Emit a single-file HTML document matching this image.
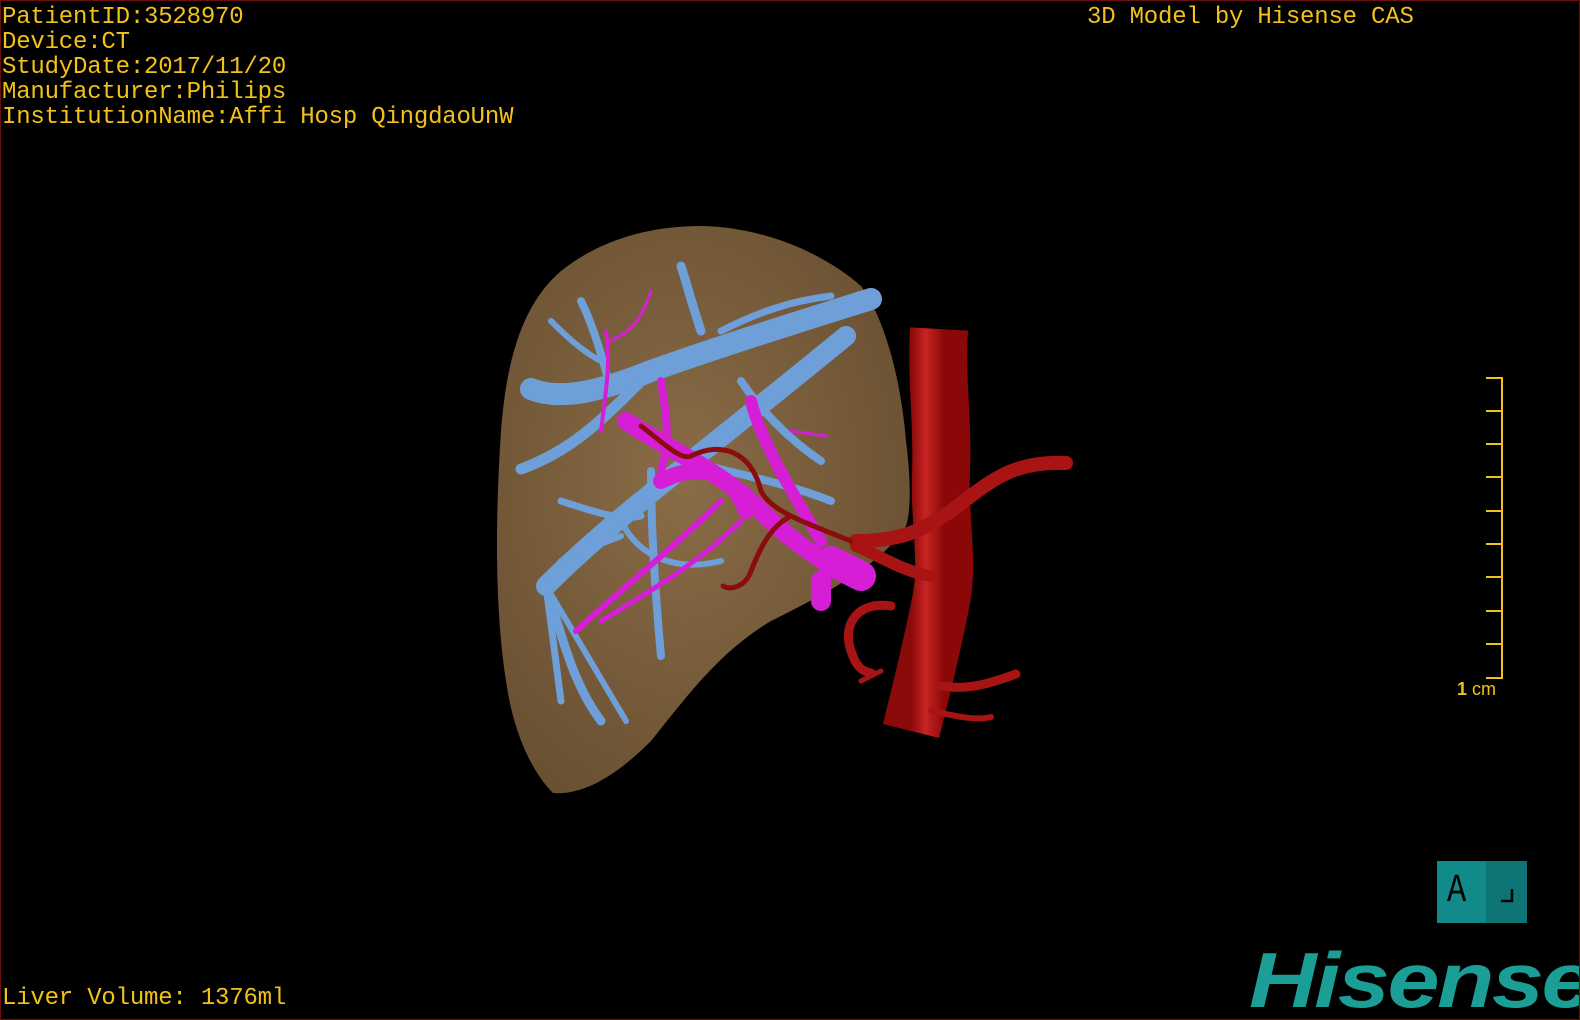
<!DOCTYPE html>
<html><head><meta charset="utf-8"><style>
html,body{margin:0;padding:0;background:#000;}
#c{position:relative;width:1580px;height:1020px;background:#000;box-sizing:border-box;border:1px solid #6a0f10;overflow:hidden;font-family:"Liberation Mono","Noto Sans CJK JP",monospace;}
.t{position:absolute;color:#f2c21a;font-size:24px;line-height:25px;white-space:pre;letter-spacing:-0.2px;}
svg{position:absolute;left:0;top:0;}
</style></head><body><div id="c">
<svg width="1580" height="1020" viewBox="0 0 1580 1020">
<defs>
<radialGradient id="lg" cx="0.45" cy="0.45" r="0.6"><stop offset="0" stop-color="#8a6c47"/><stop offset="1" stop-color="#6a5132"/></radialGradient>
<linearGradient id="rg" x1="0" x2="1"><stop offset="0" stop-color="#8a0a0a"/><stop offset="0.45" stop-color="#c82424"/><stop offset="1" stop-color="#8a0808"/></linearGradient>
</defs>
<path d="M552,792 C530,770 512,730 505,680 C494,610 494,520 500,430 C506,350 525,300 560,270 C600,238 650,225 700,225 C760,226 820,250 860,285 C885,320 900,380 905,440 C910,480 910,510 905,525 C880,565 820,595 770,620 C720,650 690,690 650,740 C620,770 585,795 552,792 Z" fill="url(#lg)"/>
<g fill="none" stroke-linecap="round" stroke="#6f9fd8">
<path d="M870,298 C800,320 720,345 650,370 C600,390 560,400 530,388" stroke-width="22"/>
<path d="M845,335 C790,380 740,420 690,460 C640,500 590,540 545,585" stroke-width="20"/>
<path d="M545,585 C560,630 570,680 600,720" stroke-width="9"/>
<path d="M545,585 L560,700" stroke-width="7"/>
<path d="M545,585 L625,720" stroke-width="6"/>
<path d="M640,380 C600,420 570,450 520,468" stroke-width="11"/>
<path d="M610,390 C600,350 590,320 580,300" stroke-width="8"/>
<path d="M700,330 C690,300 685,280 680,265" stroke-width="9"/>
<path d="M720,330 C760,310 790,300 830,295" stroke-width="7"/>
<path d="M740,380 C760,410 790,440 820,460" stroke-width="8"/>
<path d="M690,460 C720,470 780,480 830,500" stroke-width="8"/>
<path d="M650,470 C650,530 655,600 660,655" stroke-width="8"/>
<path d="M620,520 C640,560 680,570 720,560" stroke-width="6"/>
<path d="M560,500 C590,510 620,520 640,515" stroke-width="7"/>
<path d="M600,360 C580,350 560,330 550,320" stroke-width="6"/>
<path d="M560,560 C590,545 610,540 620,535" stroke-width="6"/>
</g>
<g fill="none" stroke-linecap="round" stroke="#d61ed6">
<path d="M625,420 C670,450 720,470 760,510 C790,540 820,560 850,575" stroke-width="18"/>
<path d="M830,560 L860,575" stroke-width="30"/>
<path d="M820,580 L820,600" stroke-width="20"/>
<path d="M660,480 C700,460 730,470 745,510" stroke-width="16"/>
<path d="M750,400 C760,440 790,490 820,540" stroke-width="12"/>
<path d="M660,380 C665,410 670,440 660,470" stroke-width="8"/>
<path d="M720,500 C680,540 630,580 575,630" stroke-width="6"/>
<path d="M740,520 C700,560 650,590 600,620" stroke-width="5"/>
<path d="M605,330 C610,360 605,390 600,430" stroke-width="4"/>
<path d="M650,290 C640,320 630,330 610,340" stroke-width="3"/>
<path d="M790,430 L825,435" stroke-width="3"/>
</g>
<path d="M938,328 C935,380 942,420 940,470 C938,520 948,560 940,600 C930,650 920,690 910,730" fill="none" stroke="url(#rg)" stroke-width="58" stroke-linecap="butt"/>
<g fill="none" stroke="#a81414" stroke-linecap="round">
<path d="M855,540 C900,540 920,530 950,510 C990,480 1010,460 1065,462" stroke-width="14"/>
<path d="M855,545 C880,555 900,570 930,575" stroke-width="12"/>
<path d="M890,605 C860,600 840,620 850,650 C855,665 860,670 870,672" stroke-width="9"/>
<path d="M940,685 C970,690 995,680 1015,673" stroke-width="9"/>
<path d="M930,710 C955,715 975,720 990,716" stroke-width="6"/>
<path d="M880,670 L860,680" stroke-width="5"/>
</g>
<g fill="none" stroke="#8b0c0c" stroke-linecap="round" stroke-width="5">
<path d="M640,425 C660,440 680,460 690,455 C720,440 750,450 760,490 C770,510 800,520 850,540"/>
<path d="M790,515 C770,525 760,545 750,570 C745,585 730,590 722,585"/>
</g>
<g stroke="#f2c21a" stroke-width="2" fill="none">
<path d="M1485,377 H1501 V677 H1485"/>
<path d="M1485,410 H1501 M1485,443 H1501 M1485,476 H1501 M1485,510 H1501 M1485,543 H1501 M1485,576 H1501 M1485,610 H1501 M1485,643 H1501"/>
</g>
<rect x="1436" y="860" width="49" height="62" fill="#138a8a"/>
<rect x="1485" y="860" width="41" height="62" fill="#0d7575"/>
<path d="M1500,900 H1511 V888" stroke="#000" stroke-width="2.5" fill="none"/>
</svg>
<div class="t" style="left:1px;top:4px">PatientID:3528970
Device:CT
StudyDate:2017/11/20
Manufacturer:Philips
InstitutionName:Affi Hosp QingdaoUnW</div>
<div class="t" style="left:1086px;top:4px">3D Model by Hisense CAS</div>
<div class="t" style="left:1px;top:985px">Liver Volume: 1376ml</div>
<div style="position:absolute;left:1456px;top:678px;color:#f2c21a;font:bold 18px 'Liberation Sans',sans-serif;">1<span style="font-weight:normal"> cm</span></div>
<div style="position:absolute;left:1446px;top:868px;color:#000;font:40px 'Liberation Mono',monospace;transform:scaleX(0.8);transform-origin:left;">A</div>
<div style="position:absolute;left:1248px;top:940px;color:#1a9e96;font:italic bold 78px 'Liberation Sans',sans-serif;letter-spacing:-2px;line-height:78px;transform:scaleX(1.2);transform-origin:left;">Hisense</div>
</div></body></html>
